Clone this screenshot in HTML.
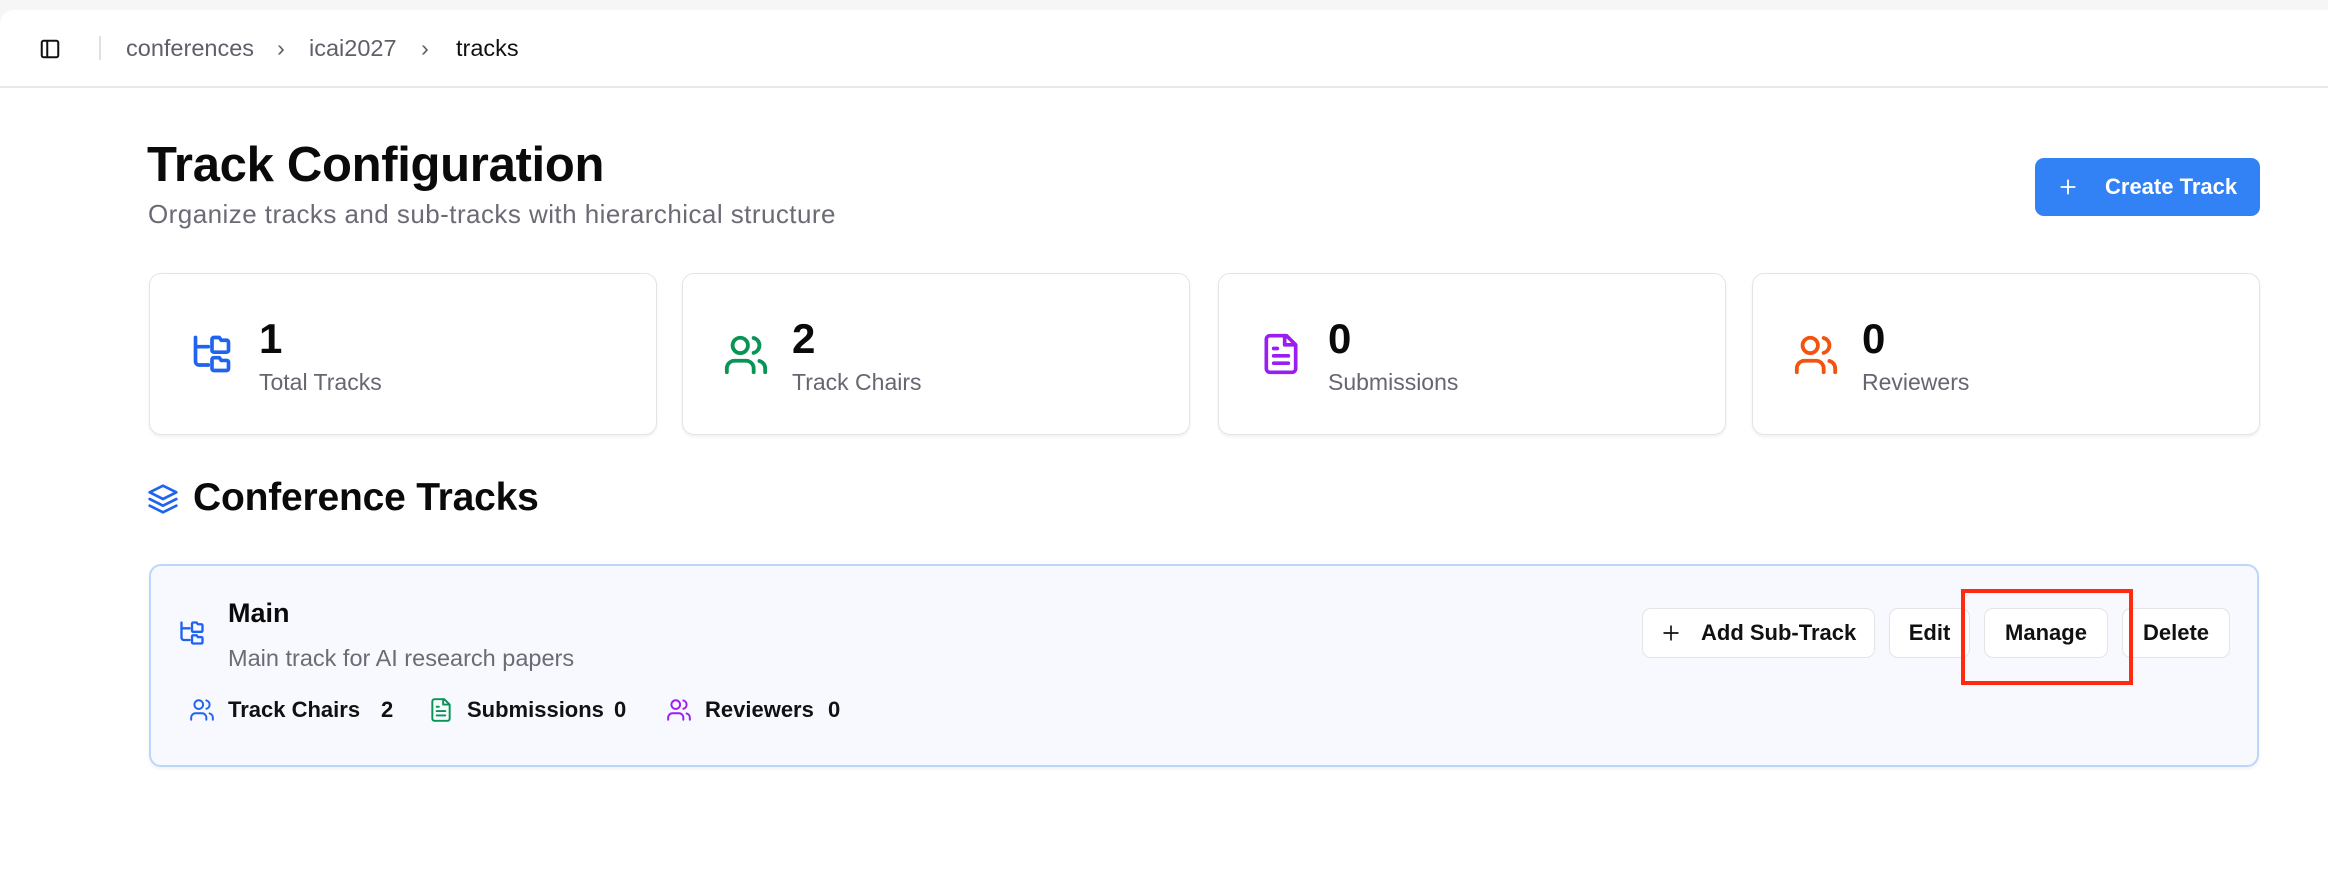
<!DOCTYPE html>
<html><head><meta charset="utf-8"><style>
*{box-sizing:border-box;margin:0;padding:0}
body{width:2328px;height:886px;background:#f6f6f7;font-family:"Liberation Sans",Arial,sans-serif;position:relative;overflow:hidden;color:#0a0a0a}
.main{position:absolute;left:0;top:10px;width:2328px;height:876px;background:#fff;border-top-left-radius:14px}
.hdr{position:absolute;left:0;top:10px;width:2328px;height:78px;border-bottom:2px solid #e8e8ea}
.abs{position:absolute}
.bc{position:absolute;top:35px;font-size:23.5px;color:#5f5f69;white-space:nowrap}
.card{position:absolute;top:273px;width:508px;height:162px;border:1.5px solid #e4e4e7;border-radius:12px;background:#fff;box-shadow:0 2px 3px rgba(0,0,0,.06)}
.card svg{position:absolute;left:40px;top:58px}
.num{position:absolute;left:109px;top:44px;font-size:42px;font-weight:bold;line-height:1}
.lbl{position:absolute;left:109px;top:95px;font-size:23px;color:#666670}
.btn{position:absolute;top:608px;height:50px;border:1.5px solid #e4e4e7;border-radius:9px;background:#fff;font-size:22px;font-weight:600;line-height:47px;text-align:center;color:#111}
.st{position:absolute;top:697px;font-size:22px;font-weight:bold;color:#111;white-space:nowrap}
</style></head><body>
<div class="main"></div>
<div class="hdr"></div>
<svg class="abs" style="left:39px;top:38px" width="22" height="22" viewBox="0 0 24 24" fill="none" stroke="#111" stroke-width="2.2"><rect x="3" y="3" width="18" height="18" rx="2"/><path d="M9 3v18"/></svg>
<div class="abs" style="left:99px;top:36px;width:1.5px;height:24px;background:#e0e0e3"></div>
<div class="bc" style="left:126px">conferences</div>
<div class="bc" style="left:277px">›</div>
<div class="bc" style="left:309px">icai2027</div>
<div class="bc" style="left:421px">›</div>
<div class="bc" style="left:456px;color:#111">tracks</div>

<div class="abs" style="left:147px;top:139px;font-size:49px;font-weight:bold;letter-spacing:-0.3px;line-height:1.1">Track Configuration</div>
<div class="abs" style="left:148px;top:199px;font-size:26px;letter-spacing:0.45px;color:#6b6b75">Organize tracks and sub-tracks with hierarchical structure</div>

<div class="abs" style="left:2035px;top:158px;width:225px;height:58px;background:#3282f6;border-radius:9px;color:#fff;font-size:22px;font-weight:600;line-height:58px">
<svg class="abs" style="left:22px;top:18px" width="22" height="22" viewBox="0 0 24 24" fill="none" stroke="#fff" stroke-width="2"><path d="M12 4v16M4 12h16"/></svg>
<span style="position:absolute;left:70px">Create Track</span></div>

<div class="card" style="left:149px"><svg width="44" height="44" viewBox="0 0 24 24" fill="none" stroke="#1f63f0" stroke-width="2" stroke-linecap="round" stroke-linejoin="round"><path d="M3 3v13a2 2 0 0 0 2 2h5M3 8h7"/><path d="M13 3h3l1 1.5h3a1 1 0 0 1 1 1V10a1 1 0 0 1-1 1h-7a1 1 0 0 1-1-1V4a1 1 0 0 1 1-1z"/><path d="M13 14h3l1 1.5h3a1 1 0 0 1 1 1V20a1 1 0 0 1-1 1h-7a1 1 0 0 1-1-1v-5a1 1 0 0 1 1-1z"/></svg><div class="num">1</div><div class="lbl">Total Tracks</div></div>
<div class="card" style="left:682px"><svg width="46" height="46" viewBox="0 0 24 24" fill="none" stroke="#079455" stroke-width="2" stroke-linecap="round"><path d="M16 21v-2a4 4 0 0 0-4-4H6a4 4 0 0 0-4 4v2"/><circle cx="9" cy="7" r="4"/><path d="M22 21v-2a4 4 0 0 0-3-3.87M16 3.13a4 4 0 0 1 0 7.75"/></svg><div class="num">2</div><div class="lbl">Track Chairs</div></div>
<div class="card" style="left:1218px"><svg width="44" height="44" viewBox="0 0 24 24" fill="none" stroke="#9a1ef2" stroke-width="2" stroke-linecap="round" stroke-linejoin="round"><path d="M15 2H6a2 2 0 0 0-2 2v16a2 2 0 0 0 2 2h12a2 2 0 0 0 2-2V7z"/><path d="M14 2v5h5M10 9H8M16 13H8M16 17H8"/></svg><div class="num">0</div><div class="lbl">Submissions</div></div>
<div class="card" style="left:1752px"><svg width="46" height="46" viewBox="0 0 24 24" fill="none" stroke="#f25410" stroke-width="2" stroke-linecap="round"><path d="M16 21v-2a4 4 0 0 0-4-4H6a4 4 0 0 0-4 4v2"/><circle cx="9" cy="7" r="4"/><path d="M22 21v-2a4 4 0 0 0-3-3.87M16 3.13a4 4 0 0 1 0 7.75"/></svg><div class="num">0</div><div class="lbl">Reviewers</div></div>

<svg class="abs" style="left:147px;top:483px" width="32" height="32" viewBox="0 0 24 24" fill="none" stroke="#1f63f0" stroke-width="2" stroke-linecap="round" stroke-linejoin="round"><path d="M12 2 2 7l10 5 10-5-10-5z"/><path d="m2 17 10 5 10-5M2 12l10 5 10-5"/></svg>
<div class="abs" style="left:193px;top:476px;font-size:39px;font-weight:bold;letter-spacing:-0.2px">Conference Tracks</div>

<div class="abs" style="left:149px;top:564px;width:2110px;height:203px;background:#f7f9fe;border:2.5px solid #bcd6fb;border-radius:12px;box-shadow:0 2px 3px rgba(0,0,0,.06)"></div>
<svg class="abs" style="left:178px;top:619px" width="28" height="28" viewBox="0 0 24 24" fill="none" stroke="#1f63f0" stroke-width="2" stroke-linecap="round" stroke-linejoin="round"><path d="M3 3v13a2 2 0 0 0 2 2h5M3 8h7"/><path d="M13 3h3l1 1.5h3a1 1 0 0 1 1 1V10a1 1 0 0 1-1 1h-7a1 1 0 0 1-1-1V4a1 1 0 0 1 1-1z"/><path d="M13 14h3l1 1.5h3a1 1 0 0 1 1 1V20a1 1 0 0 1-1 1h-7a1 1 0 0 1-1-1v-5a1 1 0 0 1 1-1z"/></svg>
<div class="abs" style="left:228px;top:598px;font-size:27px;font-weight:bold">Main</div>
<div class="abs" style="left:228px;top:645px;font-size:23.5px;color:#6b6b75">Main track for AI research papers</div>

<svg class="abs" style="left:189px;top:697px" width="26" height="26" viewBox="0 0 24 24" fill="none" stroke="#1f63f0" stroke-width="1.8" stroke-linecap="round"><path d="M16 21v-2a4 4 0 0 0-4-4H6a4 4 0 0 0-4 4v2"/><circle cx="9" cy="7" r="4"/><path d="M22 21v-2a4 4 0 0 0-3-3.87M16 3.13a4 4 0 0 1 0 7.75"/></svg>
<div class="st" style="left:228px">Track Chairs</div><div class="st" style="left:381px">2</div>
<svg class="abs" style="left:428px;top:697px" width="26" height="26" viewBox="0 0 24 24" fill="none" stroke="#079455" stroke-width="1.8" stroke-linecap="round" stroke-linejoin="round"><path d="M15 2H6a2 2 0 0 0-2 2v16a2 2 0 0 0 2 2h12a2 2 0 0 0 2-2V7z"/><path d="M14 2v5h5M10 9H8M16 13H8M16 17H8"/></svg>
<div class="st" style="left:467px">Submissions</div><div class="st" style="left:614px">0</div>
<svg class="abs" style="left:666px;top:697px" width="26" height="26" viewBox="0 0 24 24" fill="none" stroke="#9a1ef2" stroke-width="1.8" stroke-linecap="round"><path d="M16 21v-2a4 4 0 0 0-4-4H6a4 4 0 0 0-4 4v2"/><circle cx="9" cy="7" r="4"/><path d="M22 21v-2a4 4 0 0 0-3-3.87M16 3.13a4 4 0 0 1 0 7.75"/></svg>
<div class="st" style="left:705px">Reviewers</div><div class="st" style="left:828px">0</div>

<div class="btn" style="left:1642px;width:233px;text-align:left;padding-left:58px"><svg class="abs" style="left:18px;top:14px" width="20" height="20" viewBox="0 0 24 24" fill="none" stroke="#111" stroke-width="2"><path d="M12 3v18M3 12h18"/></svg>Add Sub-Track</div>
<div class="btn" style="left:1889px;width:81px">Edit</div>
<div class="btn" style="left:1984px;width:124px">Manage</div>
<div class="btn" style="left:2122px;width:108px">Delete</div>
<div class="abs" style="left:1961px;top:589px;width:172px;height:96px;border:4px solid #ff2a10"></div>
</body></html>
